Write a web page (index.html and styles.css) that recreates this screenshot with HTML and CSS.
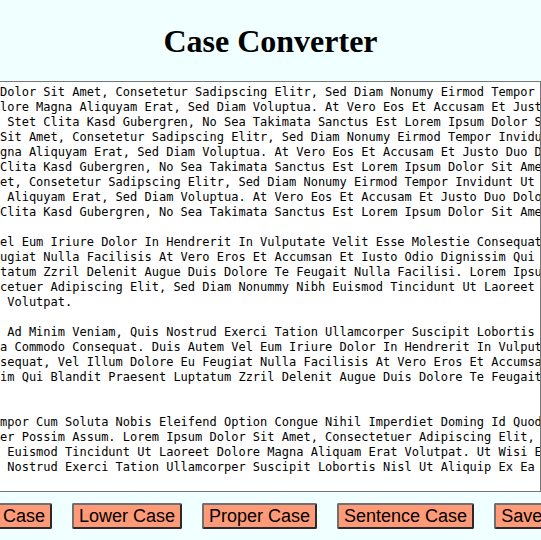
FILE: index.html
```html
<!DOCTYPE html>
<html lang="en">
<head>
<meta charset="utf-8">
<title>Case Converter</title>
<link rel="stylesheet" href="styles.css">
</head>
<body>
<h1 class="title">Case Converter</h1>
<div class="editor"><div class="text">Dolor Sit Amet, Consetetur Sadipscing Elitr, Sed Diam Nonumy Eirmod Tempor
lore Magna Aliquyam Erat, Sed Diam Voluptua. At Vero Eos Et Accusam Et Justo
 Stet Clita Kasd Gubergren, No Sea Takimata Sanctus Est Lorem Ipsum Dolor Sit
Sit Amet, Consetetur Sadipscing Elitr, Sed Diam Nonumy Eirmod Tempor Invidunt
gna Aliquyam Erat, Sed Diam Voluptua. At Vero Eos Et Accusam Et Justo Duo Dolores
Clita Kasd Gubergren, No Sea Takimata Sanctus Est Lorem Ipsum Dolor Sit Amet.
et, Consetetur Sadipscing Elitr, Sed Diam Nonumy Eirmod Tempor Invidunt Ut
 Aliquyam Erat, Sed Diam Voluptua. At Vero Eos Et Accusam Et Justo Duo Dolores
Clita Kasd Gubergren, No Sea Takimata Sanctus Est Lorem Ipsum Dolor Sit Amet.

el Eum Iriure Dolor In Hendrerit In Vulputate Velit Esse Molestie Consequat,
ugiat Nulla Facilisis At Vero Eros Et Accumsan Et Iusto Odio Dignissim Qui
tatum Zzril Delenit Augue Duis Dolore Te Feugait Nulla Facilisi. Lorem Ipsum
cetuer Adipiscing Elit, Sed Diam Nonummy Nibh Euismod Tincidunt Ut Laoreet
 Volutpat.

 Ad Minim Veniam, Quis Nostrud Exerci Tation Ullamcorper Suscipit Lobortis
a Commodo Consequat. Duis Autem Vel Eum Iriure Dolor In Hendrerit In Vulputate
sequat, Vel Illum Dolore Eu Feugiat Nulla Facilisis At Vero Eros Et Accumsan
im Qui Blandit Praesent Luptatum Zzril Delenit Augue Duis Dolore Te Feugait


mpor Cum Soluta Nobis Eleifend Option Congue Nihil Imperdiet Doming Id Quod
er Possim Assum. Lorem Ipsum Dolor Sit Amet, Consectetuer Adipiscing Elit,
 Euismod Tincidunt Ut Laoreet Dolore Magna Aliquam Erat Volutpat. Ut Wisi Enim
 Nostrud Exerci Tation Ullamcorper Suscipit Lobortis Nisl Ut Aliquip Ex Ea
</div></div>
<div class="actions">
  <div class="button-row">
    <button class="btn">Upper Case</button>
    <button class="btn">Lower Case</button>
    <button class="btn">Proper Case</button>
    <button class="btn">Sentence Case</button>
    <button class="btn btn-save">Save Text</button>
  </div>
</div>
</body>
</html>
```

FILE: styles.css
```css
html, body {
  margin: 0;
  padding: 0;
  background: #f0ffff;
  overflow: hidden;
}

body {
  width: 541px;
  height: 540px;
  font-family: "Liberation Serif", "Times New Roman", serif;
}

.title {
  margin: 24px 0 22px;
  font-family: "Liberation Serif", "Times New Roman", serif;
  font-size: 32px;
  font-weight: bold;
  text-align: center;
  line-height: 35px;
  color: #000;
}

.editor {
  box-sizing: border-box;
  width: 541px;
  height: 411px;
  background: #fff;
  border-top: 1px solid #767676;
  border-right: 1px solid #767676;
  border-bottom: 1px solid #767676;
  padding: 3px 0 1px 0;
  overflow: hidden;
}

.text {
  white-space: pre;
  font-family: "DejaVu Sans Mono", "Liberation Mono", monospace;
  font-size: 12px;
  line-height: 15px;
  color: #000;
}

.actions {
  width: 541px;
  overflow: hidden;
  margin-top: 11px;
}

.button-row {
  display: flex;
  justify-content: center;
  gap: 20px;
}

.btn {
  flex-shrink: 0;
  white-space: nowrap;
  font-family: "Liberation Sans", Arial, sans-serif;
  font-size: 18px;
  line-height: 21px;
  padding: 1px 5px 0;
  background: #ff9a78;
  color: #000;
  border-width: 2px;
  border-style: solid;
  border-color: #707070 #2a2a2a #2a2a2a #707070;
  border-radius: 2px;
}

.btn-save {
  min-width: 105px;
  text-align: left;
}
```
